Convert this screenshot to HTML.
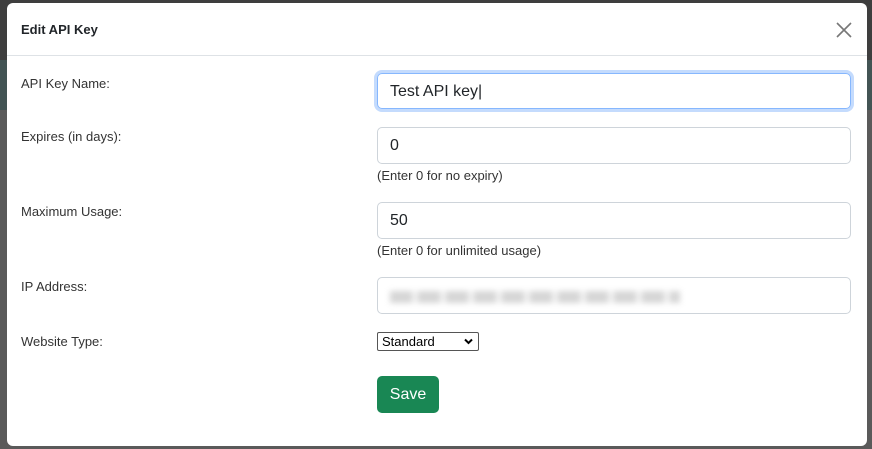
<!DOCTYPE html>
<html><head><style>
*{box-sizing:border-box;margin:0;padding:0}
html,body{width:872px;height:449px;overflow:hidden;background:#5a5a5a;font-family:"Liberation Sans",Arial,sans-serif}
.bg1{position:absolute;left:0;top:0;width:872px;height:60px;background:#3e3e3e}
.bg2{position:absolute;left:0;top:60px;width:872px;height:50px;background:#435454}
.modal{position:absolute;left:7px;top:3px;width:860px;height:443px;background:#fff;border-radius:6px}
.hdr{height:53px;border-bottom:1px solid #dee2e6;position:relative}
.title{position:absolute;left:14px;top:19px;font-size:13px;font-weight:bold;color:#212529}
.close{position:absolute;left:829px;top:19px}
.lbl{position:absolute;left:14px;font-size:13px;color:#333}
.inp{position:absolute;left:370px;width:474px;height:37px;border:1px solid #ced4da;border-radius:5px;font-size:16px;color:#212529;padding:9px 12px}
.focus{border-color:#86b7fe;box-shadow:0 0 0 3px #c4dbfd;height:36px}
.help{position:absolute;left:370px;font-size:13px;color:#333}
.sel{position:absolute;left:370px;top:329px;width:102px;height:19px;border:1px solid #555;border-radius:2px;font-size:13px;padding:1px 4px;color:#000}
.btn{position:absolute;left:370px;top:373px;width:62px;height:37px;background:#198754;color:#fff;border-radius:5px;font-size:16px;text-align:center;line-height:37px}
.blur{display:inline-block;width:290px;height:12px;background:repeating-linear-gradient(90deg,#d6d6d6 0 22px,#f2f2f2 22px 28px);filter:blur(3px);margin-top:3px}
</style></head><body>
<div class="bg1"></div><div class="bg2"></div>
<div class="modal">
<div class="hdr"><div class="title">Edit API Key</div>
<svg class="close" width="16" height="16" viewBox="0 0 16 16"><path d="M1 1L15 15M15 1L1 15" stroke="#777" stroke-width="1.6"/></svg></div>
<div class="lbl" style="top:73px">API Key Name:</div>
<div class="inp focus" style="top:70px">Test API key|</div>
<div class="lbl" style="top:126px">Expires (in days):</div>
<div class="inp" style="top:124px">0</div>
<div class="help" style="top:165px">(Enter 0 for no expiry)</div>
<div class="lbl" style="top:201px">Maximum Usage:</div>
<div class="inp" style="top:199px">50</div>
<div class="help" style="top:240px">(Enter 0 for unlimited usage)</div>
<div class="lbl" style="top:276px">IP Address:</div>
<div class="inp" style="top:274px;padding-top:10px"><span class="blur"></span></div>
<div class="lbl" style="top:331px">Website Type:</div>
<div class="sel">Standard<svg style="position:absolute;right:5px;top:5px" width="9" height="7" viewBox="0 0 9 7"><path d="M1 1.5L4.5 5L8 1.5" stroke="#000" stroke-width="2" fill="none"/></svg></div>
<div class="btn">Save</div>
</div>
</body></html>
